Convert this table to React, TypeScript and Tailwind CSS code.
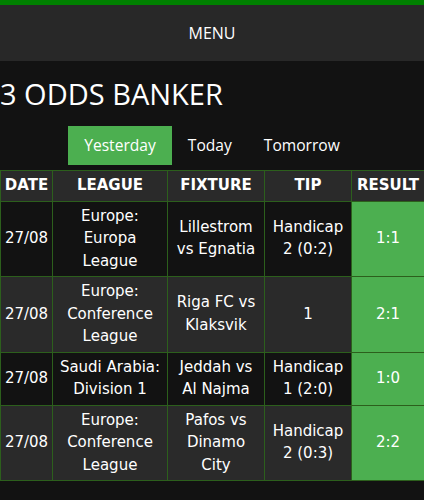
import React from 'react';

type Tip = {
  date: string;
  league: string;
  fixture: string;
  tip: string;
  result: string;
};

const tips: Tip[] = [
  { date: '27/08', league: 'Europe: Europa League', fixture: 'Lillestrom vs Egnatia', tip: 'Handicap 2 (0:2)', result: '1:1' },
  { date: '27/08', league: 'Europe: Conference League', fixture: 'Riga FC vs Klaksvik', tip: '1', result: '2:1' },
  { date: '27/08', league: 'Saudi Arabia: Division 1', fixture: 'Jeddah vs Al Najma', tip: 'Handicap 1 (2:0)', result: '1:0' },
  { date: '27/08', league: 'Europe: Conference League', fixture: 'Pafos vs Dinamo City', tip: 'Handicap 2 (0:3)', result: '2:2' },
];

const tabs = ['Yesterday', 'Today', 'Tomorrow'];

export default function App() {
  const active = 'Yesterday';

  return (
    <div className="min-h-screen bg-[#121212] text-white font-['Open_Sans',sans-serif]">
      <div className="h-[5px] bg-[#008000]" />

      {/* menu */}
      <div className="h-[56px] bg-[#282828] flex items-center justify-center text-[16px]">MENU</div>

      <h1 className="text-[29px] leading-[40px] mt-[13px] mb-[12px] whitespace-nowrap">3 ODDS BANKER</h1>

      {/* day tabs */}
      <div className="flex justify-center">
        {tabs.map((t) => (
          <div
            key={t}
            className={`h-[39px] px-4 flex items-center text-[15.6px] ${t === active ? 'bg-[#4caf50]' : ''}`}
          >
            {t}
          </div>
        ))}
      </div>

      <table className="mt-[5px] w-full table-fixed border-collapse text-center font-['DejaVu_Sans',sans-serif] text-[15px] leading-[22.5px]">
        <colgroup>
          <col className="w-[52px]" />
          <col className="w-[115px]" />
          <col className="w-[97px]" />
          <col className="w-[87px]" />
          <col className="w-[73px]" />
        </colgroup>
        <thead>
          <tr className="bg-[#2a2a2a]">
            {['DATE', 'LEAGUE', 'FIXTURE', 'TIP', 'RESULT'].map((h) => (
              <th key={h} className="border border-[#2c5f1c] pt-[3px] pb-[4px] px-0 font-bold whitespace-nowrap">
                {h}
              </th>
            ))}
          </tr>
        </thead>
        <tbody>
          {tips.map((row, i) => (
            <tr key={i} className={i % 2 === 0 ? 'bg-[#121212]' : 'bg-[#2a2a2a]'}>
              <td className="border border-[#2c5f1c] pt-[3px] pb-[4px] px-0">{row.date}</td>
              <td className="border border-[#2c5f1c] pt-[3px] pb-[4px] px-1">{row.league}</td>
              <td className="border border-[#2c5f1c] pt-[3px] pb-[4px] px-1">{row.fixture}</td>
              <td className="border border-[#2c5f1c] pt-[3px] pb-[4px] px-1">{row.tip}</td>
              <td className="border border-[#2c5f1c] pt-[3px] pb-[4px] px-1 bg-[#4caf50]">{row.result}</td>
            </tr>
          ))}
        </tbody>
      </table>
    </div>
  );
}
